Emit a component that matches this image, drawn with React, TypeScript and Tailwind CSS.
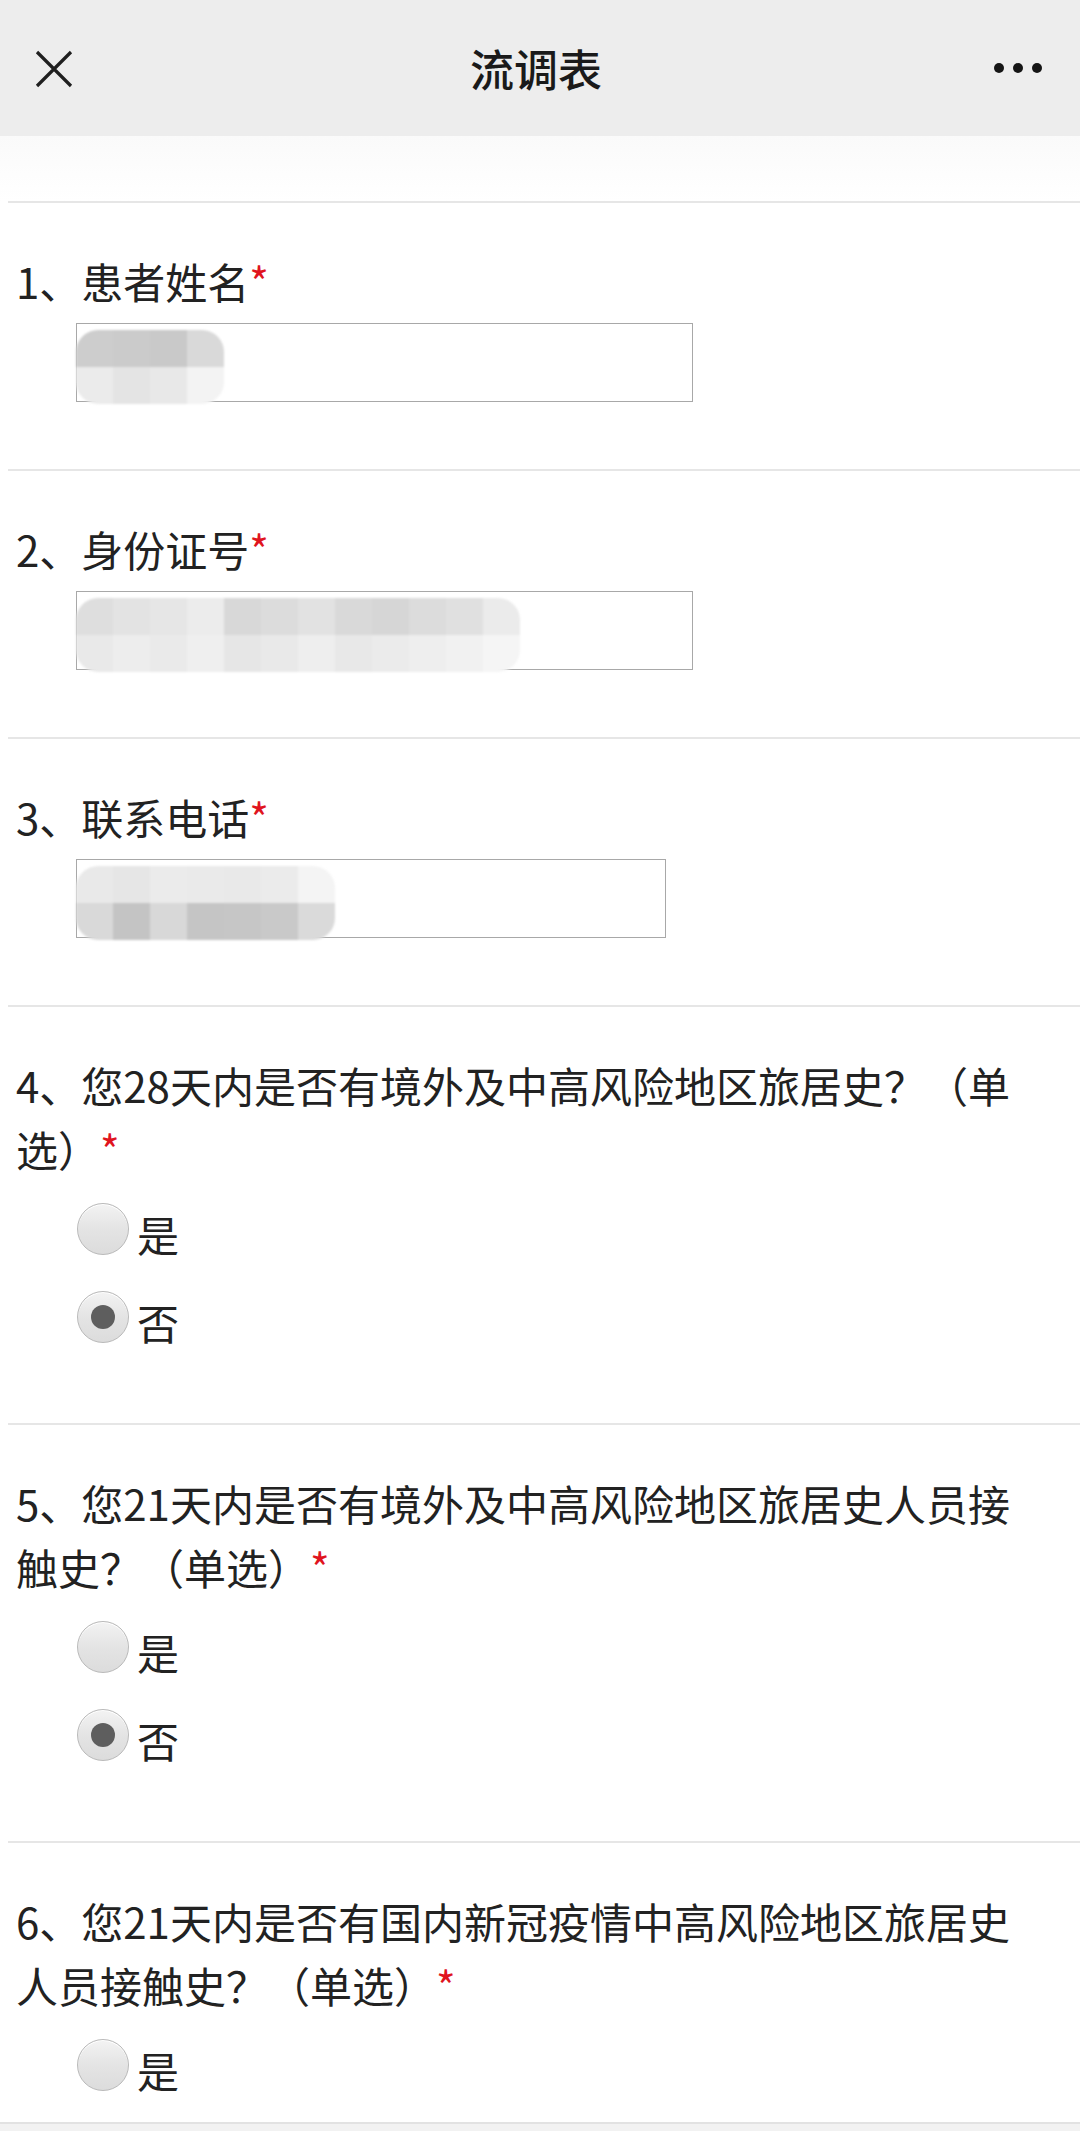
const font = {
  fontFamily: '"Noto Sans CJK SC", "Noto Sans", sans-serif',
};

type Cell = string;

function Mosaic({ rows, className }: { rows: Cell[][]; className?: string }) {
  return (
    <div className={"flex flex-col overflow-hidden rounded-[22px] blur-[1px] " + (className ?? "")}>
      {rows.map((row, i) => (
        <div key={i} className="flex">
          {row.map((c, j) => (
            <div key={j} className={"h-[37px] w-[37px] " + c} />
          ))}
        </div>
      ))}
    </div>
  );
}

function Star() {
  return <span className="text-[#e0141e]">*</span>;
}

function TextQuestion({
  label,
  width,
  mosaic,
}: {
  label: string;
  width: string;
  mosaic: Cell[][];
}) {
  return (
    <section className="ml-2 border-t-2 border-[#e6e6e6] pl-2 pt-[46px] pb-[67px]">
      <div className="h-[64px] text-[42px] leading-[64px] text-[#222]">
        {label}
        <Star />
      </div>
      <div className={"ml-[60px] mt-[10px] flex h-[79px] items-center border border-[#a8a8a8] bg-white " + width}>
        <Mosaic rows={mosaic} className="-ml-px mt-[8px]" />
      </div>
    </section>
  );
}

function Radio({ label, checked }: { label: string; checked?: boolean }) {
  return (
    <div className="flex h-[88px] items-center">
      <div className="ml-[61px] flex h-[52px] w-[52px] items-center justify-center rounded-full border border-[#b9b9b9] bg-gradient-to-b from-[#f3f3f3] via-[#e4e4e4] to-[#dcdcdc] shadow-[inset_0_1px_0_#fff]">
        {checked && <div className="h-[24px] w-[24px] rounded-full bg-[#5e5e5e]" />}
      </div>
      <span className="ml-[8px] mt-[10px] text-[42px] leading-[42px] text-[#222]">{label}</span>
    </div>
  );
}

function ChoiceQuestion({
  label,
  options,
  last,
}: {
  label: string;
  options: { label: string; checked?: boolean }[];
  last?: boolean;
}) {
  return (
    <section className={"ml-2 border-t-2 border-[#e6e6e6] pl-2 pt-[46px] " + (last ? "" : "pb-[62px]")}>
      <div className="w-[1016px] text-[42px] leading-[64px] text-[#222]">
        {label}
        <Star />
      </div>
      <div className="mt-[4px]">
        {options.map((o) => (
          <Radio key={o.label} label={o.label} checked={o.checked} />
        ))}
      </div>
    </section>
  );
}

const yesNo = [{ label: "是" }, { label: "否", checked: true }];

export default function App() {
  return (
    <div className="flex h-[2131px] w-[1080px] flex-col overflow-hidden bg-white" style={font}>
      {/* top bar */}
      <header className="flex h-[136px] shrink-0 items-center justify-between bg-[#ededed] px-[35px]">
        <svg width="38" height="38" viewBox="0 0 38 38" className="mt-[1px]">
          <path d="M2 2 L36 36 M36 2 L2 36" stroke="#1f1f1f" strokeWidth="3.2" fill="none" />
        </svg>
        <h1 className="ml-[6px] text-[44px] font-medium text-[#1a1a1a]">流调表</h1>
        <svg width="50" height="12" viewBox="0 0 50 12" className="mr-[2px]">
          <circle cx="6" cy="6" r="5" fill="#151515" />
          <circle cx="25" cy="6" r="5" fill="#151515" />
          <circle cx="44" cy="6" r="5" fill="#151515" />
        </svg>
      </header>

      <main className="min-h-0 flex-1 overflow-hidden">
        <div className="h-[65px] bg-gradient-to-b from-[#fafafa] to-white" />

        <TextQuestion
          label="1、患者姓名"
          width="w-[617px]"
          mosaic={[
            ["bg-[#cdcdcd]", "bg-[#cbcbcb]", "bg-[#c9c9c9]", "bg-[#d9d9d9]"],
            ["bg-[#ebebeb]", "bg-[#e4e4e4]", "bg-[#e8e8e8]", "bg-[#f3f3f3]"],
          ]}
        />
        <TextQuestion
          label="2、身份证号"
          width="w-[617px]"
          mosaic={[
            ["bg-[#dedede]", "bg-[#e3e3e3]", "bg-[#e6e6e6]", "bg-[#ececec]", "bg-[#d8d8d8]", "bg-[#dcdcdc]", "bg-[#e2e2e2]", "bg-[#d9d9d9]", "bg-[#d6d6d6]", "bg-[#dcdcdc]", "bg-[#e0e0e0]", "bg-[#ebebeb]"],
            ["bg-[#e9e9e9]", "bg-[#ededed]", "bg-[#eaeaea]", "bg-[#efefef]", "bg-[#e6e6e6]", "bg-[#e9e9e9]", "bg-[#eeeeee]", "bg-[#e8e8e8]", "bg-[#ebebeb]", "bg-[#eeeeee]", "bg-[#f1f1f1]", "bg-[#f5f5f5]"],
          ]}
        />
        <TextQuestion
          label="3、联系电话"
          width="w-[590px]"
          mosaic={[
            ["bg-[#e9e9e9]", "bg-[#e6e6e6]", "bg-[#ebebeb]", "bg-[#eaeaea]", "bg-[#e9e9e9]", "bg-[#ebebeb]", "bg-[#f4f4f4]"],
            ["bg-[#d9d9d9]", "bg-[#c4c4c4]", "bg-[#d8d8d8]", "bg-[#c5c5c5]", "bg-[#c6c6c6]", "bg-[#c9c9c9]", "bg-[#dadada]"],
          ]}
        />
        <ChoiceQuestion label="4、您28天内是否有境外及中高风险地区旅居史？（单选）" options={yesNo} />
        <ChoiceQuestion label="5、您21天内是否有境外及中高风险地区旅居史人员接触史？（单选）" options={yesNo} />
        <ChoiceQuestion
          label="6、您21天内是否有国内新冠疫情中高风险地区旅居史人员接触史？（单选）"
          options={[{ label: "是" }]}
          last
        />
      </main>
      <div className="h-[9px] shrink-0 border-t-2 border-[#e2e2e2] bg-[#f2f2f2]" />
    </div>
  );
}
